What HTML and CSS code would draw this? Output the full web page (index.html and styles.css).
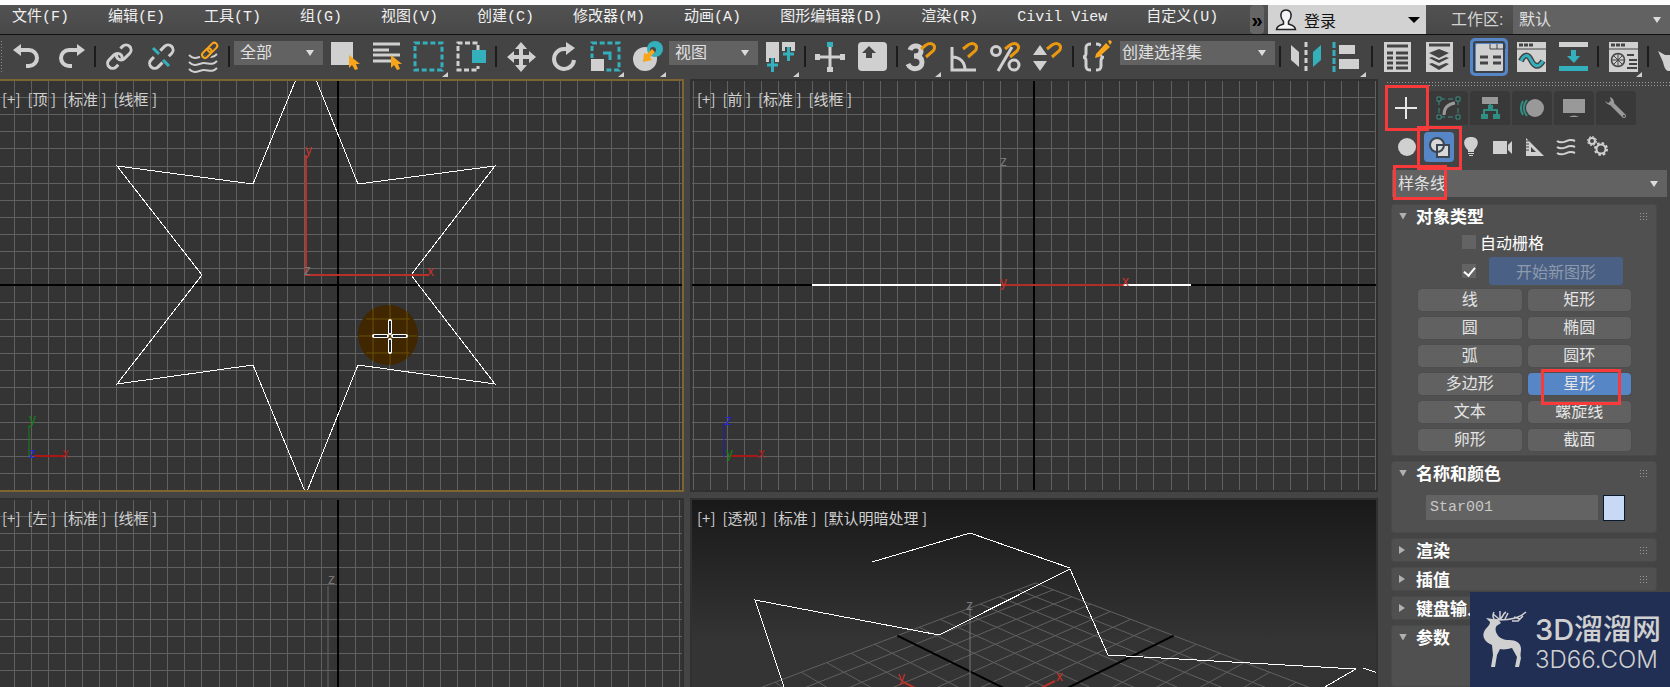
FILE: index.html
```html
<!DOCTYPE html>
<html lang="zh-CN">
<head>
<meta charset="utf-8">
<title>Star001</title>
<link rel="stylesheet" href="styles.css">
</head>
<body>
<header class="menubar">
  <nav class="menus">
    <button>文件(F)</button><button>编辑(E)</button><button>工具(T)</button><button>组(G)</button><button>视图(V)</button><button>创建(C)</button><button>修改器(M)</button><button>动画(A)</button><button>图形编辑器(D)</button><button>渲染(R)</button><button>Civil View</button><button>自定义(U)</button>
  </nav>
  <button class="more" aria-label="更多">»</button>
  <button class="login">
    <svg width="24" height="24" viewBox="0 0 24 24"><path d="M12 2c-4 0-5.500 3-5 6.500.4 2.800 1.600 4 2.500 5v2.500C7 17 3 17.500 2.500 21.500h19C21 17.500 17 17 14.500 16v-2.500c.9-1 2.100-2.200 2.500-5C17.500 5 16 2 12 2z" fill="#f4f4f8" stroke="#222" stroke-width="1.500"/></svg>
    <span>登录</span><i class="tri"></i>
  </button>
  <label class="ws-label" for="ws">工作区:</label>
  <span class="drop ws"><select id="ws"><option>默认</option></select></span>
</header>

<div class="toolbar">
  <i class="grip-v"></i>
  <button class="tool" aria-label="撤消"><svg viewBox="0 0 42 42"><path d="M11 14h11a8 8 0 0 1 0 16h-3" class="s4"/><path d="M6 14l8-6v12z" class="f"/></svg></button>
  <button class="tool" aria-label="重做"><svg viewBox="0 0 42 42"><path d="M30 14H20a8 8 0 0 0 0 16h3" class="s4"/><path d="M36 14l-8-6v12z" class="f"/></svg></button>
  <i class="sep"></i>
  <button class="tool" aria-label="链接"><svg viewBox="0 0 42 42"><g transform="rotate(-45 20 21)" class="s3"><path d="M14 26h-3a5 5 0 0 1 0-10h7a5 5 0 0 1 5 5 5 5 0 0 1-3 4"/><path d="M27 16h3a5 5 0 0 1 0 10h-7a5 5 0 0 1-5-5 5 5 0 0 1 3-4"/></g></svg></button>
  <button class="tool" aria-label="取消链接"><svg viewBox="0 0 42 42"><g transform="rotate(-45 20 21)" class="s3"><path d="M17 26h-6a5 5 0 0 1 0-10h4"/><path d="M24 16h6a5 5 0 0 1 0 10h-4"/></g><path d="M12 12l6 6M22 24l6 6" class="t3"/></svg></button>
  <button class="tool" aria-label="绑定到空间扭曲"><svg viewBox="0 0 42 42"><path d="M6 19c6 6 10 1 15 1s8 3 13-2M6 26c6 6 10 1 15 1s8 3 13-2M6 33c6 6 10 1 15 1s8 3 13-2" class="s2"/><g transform="rotate(-45 27 14)" stroke="#444" stroke-width="5" fill="none"><rect x="17" y="11" width="11" height="6" rx="3"/><rect x="25" y="11" width="11" height="6" rx="3"/></g><g transform="rotate(-45 27 14)" class="o2"><rect x="17" y="11" width="11" height="6" rx="3"/><rect x="25" y="11" width="11" height="6" rx="3"/></g></svg></button>
  <i class="sep"></i>
  <span class="drop small"><select aria-label="选择过滤器"><option>全部</option></select></span>
  <button class="tool" aria-label="选择对象"><svg viewBox="0 0 42 42"><path d="M7 6h22v23H7z" class="f"/><path d="M25 19v13l3-3 3 5 3-1-2-5h4z" class="of"/></svg></button>
  <button class="tool" aria-label="按名称选择"><svg viewBox="0 0 42 42"><path d="M7 8h27M7 14h16M7 19h27M7 25h18" class="s3"/><path d="M25 19v13l3-3 3 5 3-1-2-5h4z" class="of"/></svg></button>
  <button class="tool" aria-label="矩形选择区域"><svg viewBox="0 0 42 42"><rect x="7" y="7" width="27" height="27" class="t3" stroke-dasharray="5 2.700"/><path d="M40 36v5h-6z" class="f"/></svg></button>
  <button class="tool" aria-label="窗口交叉"><svg viewBox="0 0 42 42"><path d="M28 14V7H8v27h20v-4" class="s3" stroke-dasharray="5 2.500"/><path d="M22 14h14v13H22z" class="tf"/></svg></button>
  <i class="sep"></i>
  <button class="tool" aria-label="移动"><svg viewBox="0 0 42 42"><path d="M21 9v25M9 21h25" class="s4"/><path d="M21 6l6 7H15zM21 36l6-7H15zM7 21l7-6v12zM36 21l-7-6v12z" class="f"/></svg></button>
  <button class="tool" aria-label="旋转"><svg viewBox="0 0 42 42"><path d="M25 13h-3a10 10 0 1 0 10 11" class="s4"/><path d="M24 6l9 6-9 7z" class="f"/></svg></button>
  <button class="tool" aria-label="缩放"><svg viewBox="0 0 42 42"><rect x="8" y="7" width="27" height="27" class="t3" stroke-dasharray="5 2.700"/><path d="M6 22h15v14H6z" fill="#444"/><path d="M7 23h13v12H7z" class="f"/><path d="M19 17h7v7" class="t3"/><path d="M40 36v5h-6z" class="f"/></svg></button>
  <button class="tool" aria-label="放置"><svg viewBox="0 0 42 42"><circle cx="19" cy="23" r="12" class="f"/><circle cx="29" cy="13" r="8" class="tf"/><circle cx="27" cy="14" r="3" fill="#444"/><path d="M26 13l3 3-5 5 2 3-9 2 1-9 3 1z" class="of"/><path d="M40 36v5h-6z" class="f"/></svg></button>
  <span class="drop small"><select aria-label="参考坐标系"><option>视图</option></select></span>
  <button class="tool" aria-label="轴点中心"><svg viewBox="0 0 42 42"><path d="M7 6h13v20H7zM23 6h13v15H23z" class="f"/><path d="M13 22v14M7 29h13M29 11v14M23 18h13" stroke="#444" stroke-width="6"/><path d="M13.500 22v14M8 29h11M29.500 11v14M24 18h11" class="t3"/><path d="M40 36v5h-6z" class="f"/></svg></button>
  <i class="sep"></i>
  <button class="tool" aria-label="操纵"><svg viewBox="0 0 42 42"><path d="M21 11v23M9 21h25" class="s3"/><path d="M18 6h6v5h-6z" class="tf"/><path d="M6 18h5v6H6zM31 18h5v6h-5zM18 31h6v5h-6z" class="f"/></svg></button>
  <button class="tool" aria-label="键盘快捷键覆盖"><svg viewBox="0 0 42 42"><rect x="7" y="6" width="29" height="29" rx="4" class="f"/><path d="M18 10l7 7h-4v5h-6v-5h-4z" fill="#444"/></svg></button>
  <i class="sep"></i>
  <button class="tool" aria-label="捕捉开关"><svg viewBox="0 0 42 42"><path d="M9 14c2-6 12-5 11 1 0 4-4 5-7 5 4 0 8 1 8 6 0 8-11 9-14 2" fill="none" stroke="#d0d0d0" stroke-width="5"/><g class="mag"><path d="M20 13l5-4c6-4 11 1 7 6l-7 6"/></g><path d="M40 36v5h-6z" class="f"/></svg></button>
  <button class="tool" aria-label="角度捕捉"><svg viewBox="0 0 42 42"><path d="M9 11v23h24M9 21c8 0 13 5 13 13" class="s3"/><g class="mag"><path d="M20 13l5-4c6-4 11 1 7 6l-7 6"/></g></svg></button>
  <button class="tool" aria-label="百分比捕捉"><svg viewBox="0 0 42 42"><circle cx="11" cy="15" r="4.500" class="s3"/><circle cx="29" cy="29" r="5" class="s3"/><path d="M27 11L13 35" class="s3"/><g class="mag"><path d="M20 13l5-4c6-4 11 1 7 6l-7 6"/></g></svg></button>
  <button class="tool" aria-label="微调器捕捉"><svg viewBox="0 0 42 42"><path d="M13 9l7 10H6zM13 35l7-10H6z" class="f"/><g class="mag"><path d="M20 13l5-4c6-4 11 1 7 6l-7 6"/></g></svg></button>
  <i class="sep"></i>
  <button class="tool" aria-label="编辑命名选择集"><svg viewBox="0 0 42 42"><path d="M14 8c-4 0-5 1-5 4v5c0 2-1 4-3 4 2 0 3 2 3 4v5c0 3 1 4 5 4M19 8c4 0 5 1 5 4v5c0 2 1 4 3 4-2 0-3 2-3 4v5c0 3-1 4-5 4" class="s3"/><path d="M32 8l-9 9" stroke="#444" stroke-width="9"/><path d="M29 7l4 4-11 10-4 1 1-4zM31 5l2-1 2 2-2 3z" class="of"/></svg></button>
  <span class="drop wide"><select aria-label="命名选择集"><option>创建选择集</option></select></span>
  <i class="sep"></i>
  <button class="tool" aria-label="镜像"><svg viewBox="0 0 42 42"><path d="M7 9l8 7v15l-8-7z" class="f"/><path d="M37 9l-8 7v15l8-7z" class="tf"/><path d="M22 6v30" class="s3" stroke-dasharray="5 3"/></svg></button>
  <button class="tool" aria-label="对齐"><svg viewBox="0 0 42 42"><path d="M8 6v30" class="t3" stroke-dasharray="6 2"/><path d="M13 9h16v9H13zM13 23h20v10H13z" class="f"/><path d="M40 36v5h-6z" class="f"/></svg></button>
  <i class="sep"></i>
  <button class="tool" aria-label="场景资源管理器"><svg viewBox="0 0 42 42"><path d="M8 6h27v30H8z" class="f"/><path d="M11 10h21M11 17h6M20 17h12M11 22h6M20 22h12M11 27h6M20 27h12M11 32h6M20 32h12" class="d2"/></svg></button>
  <button class="tool" aria-label="层资源管理器"><svg viewBox="0 0 42 42"><path d="M8 6h27v30H8z" class="f"/><path d="M11 9h21" class="d2"/><path d="M21 13l10 4-10 5-10-5z" fill="#444"/><path d="M11 22l3-1 7 3 7-3 3 1-10 5zM11 28l3-1 7 3 7-3 3 1-10 6z" fill="#444"/></svg></button>
  <i class="sep"></i>
  <button class="tool on" aria-label="功能区"><svg viewBox="0 0 42 42"><path d="M9 8h28v27H8V9z" class="f"/><path d="M22 8v5h15M29 8v5M37 8v5" fill="none" stroke="#444" stroke-width="1"/><path d="M12 21h8M25 21h8M12 27h8M25 27h8" stroke="#444" stroke-width="3"/></svg></button>
  <button class="tool" aria-label="曲线编辑器"><svg viewBox="0 0 42 42"><path d="M7 6h29v30H7z" class="f"/><path d="M7 13h29" class="d1"/><path d="M9 9h4M14 9h4M19 9h4" class="d2"/><path d="M11 25c3-7 7-7 10-1s7 9 12 1" fill="none" stroke="#444" stroke-width="6"/><path d="M11 25c3-7 7-7 10-1s7 9 12 1" class="t3"/></svg></button>
  <button class="tool" aria-label="图解视图"><svg viewBox="0 0 42 42"><path d="M7 6h29v5H7z" class="f"/><path d="M7 30h29v5H7zM19 14h5v6h4l-6 7-7-7h4z" class="tf"/></svg></button>
  <i class="sep"></i>
  <button class="tool" aria-label="材质编辑器"><svg viewBox="0 0 42 42"><path d="M7 6h29v30H7z" class="f"/><path d="M7 13h29" class="d1"/><path d="M9 9h4M14 9h4M19 9h4" class="d2"/><circle cx="16" cy="24" r="6.500" fill="#d0d0d0" stroke="#444" stroke-width="1.500"/><path d="M10 24h12M16 18v12M12 20l8 8M20 20l-8 8" class="d1"/><path d="M25 19h7M27 24h8M27 28h8M25 32h10" stroke="#444" stroke-width="2"/><path d="M40 36v5h-6z" class="f"/></svg></button>
  <i class="sep"></i>
  <button class="tool last" aria-label="渲染设置"><svg viewBox="0 0 42 42"><path d="M6 15l7 4h20c4 7 1 14-5 16H16c-3-1-4-5-5-9z" class="f"/></svg></button>
</div>

<main class="work">
  <section class="views">
    <div class="view active">
      <svg class="scene" viewBox="0 81 682 409" preserveAspectRatio="xMidYMid slice">
        <g class="grid" data-x="338" data-y="285"></g>
        <circle cx="388" cy="335" r="30" fill="#402700"/>
        <path class="halo" d="M373 308v54M390 305v60M407 312v46M359 336h58M366 319h44M366 353h44"/>
        <path class="shape" d="M306 55L253 184 117 166 202 275 117 384 253 365 306 494 358 365 495 384 411 275 495 166 358 184z"/>
        <path class="red" d="M306 155v120h122"/>
        <text x="305" y="155" class="ax r">y</text><text x="427" y="276" class="ax r">x</text><text x="304" y="275" class="ax k">z</text>
        <path d="M390 321v12M390 340v12M374 336h13M393 336h13" stroke="#fff" stroke-width="4" stroke-linecap="round"/>
        <path d="M390 321v12M390 340v12M374 336h13M393 336h13" stroke="#222" stroke-width="2"/>
        <path d="M29 457v-32" stroke="#178017"/><path d="M34 456h30" stroke="#a81818" stroke-width="2"/>
        <text x="29" y="424" class="ax g">y</text><text x="62" y="458" class="ax m">x</text><text x="29" y="458" class="ax b">z</text>
      </svg>
      <div class="labels"><button>[+]</button><button>[顶 ]</button><button>[标准 ]</button><button>[线框 ]</button></div>
    </div>
    <div class="view">
      <svg class="scene" viewBox="692 81 684 409" preserveAspectRatio="xMidYMid slice">
        <g class="grid" data-x="1034" data-y="285"></g>
        <path d="M1001 280V165" stroke="#777"/>
        <path d="M812 285h379" stroke="#fff" stroke-width="2"/>
        <path d="M1001 285h122" stroke="#b03028" stroke-width="2"/>
        <text x="1000" y="166" class="ax k">z</text><text x="1000" y="287" class="ax r">y</text><text x="1122" y="286" class="ax r">x</text>
        <path d="M724 457v-34" stroke="#1c1cc0"/><path d="M730 456h28" stroke="#a81818" stroke-width="2"/>
        <text x="725" y="425" class="ax b">z</text><text x="726" y="458" class="ax g">y</text><text x="758" y="458" class="ax m">x</text>
      </svg>
      <div class="labels"><button>[+]</button><button>[前 ]</button><button>[标准 ]</button><button>[线框 ]</button></div>
    </div>
    <div class="view low">
      <svg class="scene" viewBox="0 500 682 187" preserveAspectRatio="xMidYMin slice">
        <g class="grid" data-x="338" data-y="721"></g>
        <path d="M328 586v200" stroke="#666"/><text x="328" y="584" class="ax k">z</text>
      </svg>
      <div class="labels"><button>[+]</button><button>[左 ]</button><button>[标准 ]</button><button>[线框 ]</button></div>
    </div>
    <div class="view low persp">
      <svg class="scene" viewBox="692 500 684 187" preserveAspectRatio="xMidYMin slice">
        <g class="plane"></g>
        <path d="M970 606v90" stroke="#777"/><text x="966" y="610" class="ax k">z</text>
        <path class="shape" d="M872 562L970 533 1070 568M784 687L755 600 939 635 1070 569 1108 655 1356 669 1316 692M1363 668L1378 673"/>
        <path class="red" d="M903 682l12 6M1055 681l-14 7"/>
        <text x="898" y="682" class="ax r">y</text><text x="1056" y="681" class="ax r">x</text>
      </svg>
      <div class="labels"><button>[+]</button><button>[透视 ]</button><button>[标准 ]</button><button>[默认明暗处理 ]</button></div>
    </div>
  </section>

  <aside class="panel">
    <i class="grip-h"></i>
    <div class="tabs">
      <button class="tab cur" aria-label="创建"><svg viewBox="0 0 40 34"><path d="M20 6v22M9 17h22" stroke="#e8e8e8" stroke-width="2"/></svg><span class="mark m1"></span></button>
      <button class="tab" aria-label="修改"><svg viewBox="0 0 40 34"><path d="M12 8h17M12 26h17M11 9v17M30 9v17" stroke="#3a8f84" stroke-dasharray="5 3"/><path d="M9 6h4v4H9zM28 6h4v4h-4zM9 24h4v4H9zM28 24h4v4h-4z" fill="#333" stroke="#3a8f84"/><path d="M16 24c0-7 4-11 11-12" fill="none" stroke="#999" stroke-width="3"/></svg></button>
      <button class="tab" aria-label="层次"><svg viewBox="0 0 40 34"><path d="M12 6h16v7H12z" fill="#999"/><path d="M20 13v6M14 25v-6h13v6" fill="none" stroke="#2f8f84" stroke-width="2"/><path d="M11 23h7v5h-7zM23 23h7v5h-7zM18 14h5v4h-5z" fill="#2f8f84"/></svg></button>
      <button class="tab" aria-label="运动"><svg viewBox="0 0 40 34"><circle cx="23" cy="17" r="9" fill="#999"/><path d="M15 9c-4 5-4 11 0 16M11 10c-3 5-3 9 0 14" fill="none" stroke="#2f8f84" stroke-width="2"/></svg></button>
      <button class="tab" aria-label="显示"><svg viewBox="0 0 40 34"><path d="M9 8h22v14H9zM15 26q5-3 10 0z" fill="#999"/></svg></button>
      <button class="tab" aria-label="实用程序"><svg viewBox="0 0 40 34"><path d="M15 12l13 13" stroke="#999" stroke-width="4" stroke-linecap="round"/><path d="M9 10a6 6 0 0 0 9 3 6 6 0 0 0-4-7l1 5-3 1z" fill="#999"/><circle cx="28" cy="25" r="1" fill="#333"/></svg></button>
    </div>
    <div class="cats">
      <button aria-label="几何体"><svg viewBox="0 0 32 30"><circle cx="16" cy="15" r="9" class="f"/></svg></button>
      <button class="cat-on" aria-label="图形"><svg viewBox="0 0 32 30"><rect x="1" width="30" height="30" rx="4" fill="#5686c6"/><circle cx="14" cy="13" r="7" fill="#d8d8d8" stroke="#3c4552" stroke-width="2"/><path d="M14 13h12v12H14z" fill="#d8d8d8" stroke="#3c4552" stroke-width="2"/><path d="M21 13a7 7 0 0 1-7 7" fill="none" stroke="#3c4552" stroke-width="2"/></svg><span class="mark m2"></span></button>
      <button aria-label="灯光"><svg viewBox="0 0 32 30"><path d="M16 5c-9 0-8 9-3 13v2h6v-2c5-4 6-13-3-13zM13 21h6v1h-6zM14 23h4v1h-4z" class="f"/></svg></button>
      <button aria-label="摄影机"><svg viewBox="0 0 32 30"><path d="M6 9h14v13H6zM21 13l4-4v13l-4-4z" class="f"/></svg></button>
      <button aria-label="辅助对象"><svg viewBox="0 0 32 30"><path d="M7 6v18h18zM12 15v5h5z" class="f" fill-rule="evenodd"/><path d="M7 9h3M7 12h3M7 15h3M7 18h3" stroke="#444"/></svg></button>
      <button aria-label="空间扭曲"><svg viewBox="0 0 32 30"><path d="M6 9c7 5 10-4 18 0M6 15c7 5 10-4 18 0M6 21c7 5 10-4 18 0" class="s2"/></svg></button>
      <button aria-label="系统"><svg viewBox="0 0 32 30"><circle cx="9" cy="9" r="3" class="s2"/><circle cx="9" cy="9" r="4.500" fill="none" stroke="#d0d0d0" stroke-width="1" stroke-dasharray="2 1.500"/><circle cx="18" cy="17" r="4.500" class="s2"/><circle cx="18" cy="17" r="6" fill="none" stroke="#d0d0d0" stroke-width="2" stroke-dasharray="2.500 2.200"/></svg></button>
    </div>
    <span class="drop kind"><select aria-label="图形类别"><option>样条线</option></select><span class="mark m3"></span></span>

    <div class="rolls">
      <section class="roll">
        <h2><button><i class="dn"></i>对象类型</button><i class="dots"></i></h2>
        <div class="checks">
          <label><input type="checkbox">自动栅格</label>
          <div class="startrow"><input type="checkbox" checked aria-label="开始新图形"><button class="start" disabled>开始新图形</button></div>
        </div>
        <div class="types">
          <button>线</button><button>矩形</button><button>圆</button><button>椭圆</button><button>弧</button><button>圆环</button><button>多边形</button><button class="sel">星形<span class="mark m4"></span></button><button>文本</button><button>螺旋线</button><button>卵形</button><button>截面</button>
        </div>
      </section>
      <section class="roll">
        <h2><button><i class="dn"></i>名称和颜色</button><i class="dots"></i></h2>
        <div class="name"><input type="text" value="Star001" aria-label="名称"><button class="swatch" aria-label="颜色"></button></div>
      </section>
      <section class="roll"><h2><button><i class="rt"></i>渲染</button><i class="dots"></i></h2></section>
      <section class="roll"><h2><button><i class="rt"></i>插值</button><i class="dots"></i></h2></section>
      <section class="roll"><h2><button><i class="rt"></i>键盘输入</button><i class="dots"></i></h2></section>
      <section class="roll grow"><h2><button><i class="dn"></i>参数</button><i class="dots"></i></h2></section>
    </div>
  </aside>
</main>

<div class="brand">
  <svg width="48" height="62" viewBox="0 0 48 62"><path d="M4 9l7 1c3-1 6 1 8 4l-3 2c-3 1-3 6-1 9 2 4 7 6 12 6 7 0 12 3 12 9 0 4-1 5 0 9l-2 9h-4l2-10-5-9c-4 1-8 2-12 1l-3 6-2 12H9l2-12-1-10C3 33 0 28 2 23c2-5 6-6 6-10z" fill="#d0d0d0"/><path d="M12 10c-2-3-1-5 0-7M15 11c7-1 4-5 9-8M17 11c9 0 20-1 27-8M11 5l6 5M18 2v7M26 4l-3 6M32 8l6 2M30 12h6l5-5" fill="none" stroke="#d0d0d0" stroke-width="1.500"/></svg>
  <div class="brand-text"><b>3D溜溜网</b><span>3D66.COM</span></div>
</div>
<script src="scene.js"></script>
</body>
</html>
```
FILE: styles.css
```css
* { box-sizing: border-box; }
body { margin: 0; height: 100vh; display: flex; flex-direction: column; overflow: hidden; background: #444; color: #e4e4e4; font: 16px "Liberation Sans", "Noto Sans CJK SC", sans-serif; border-top: 5px solid #fdfdfd; }
button, select, input { font: inherit; color: inherit; margin: 0; padding: 0; border: 0; background: none; }
button { position: relative; }
svg { display: block; }

.menubar { display: flex; align-items: stretch; height: 30px; flex: none; background: linear-gradient(#525252, #484848); border-bottom: 1px solid #111; }
.menus { display: flex; align-items: flex-start; gap: 39px; padding-left: 12px; flex: 1; overflow: hidden; }
.menus button { font: 15px/25px "Liberation Mono", "Noto Sans CJK SC", monospace; white-space: nowrap; color: #f0f0f0; }
.more { width: 14px; background: #666; border-radius: 4px; color: #000; font-size: 20px; font-weight: bold; line-height: 20px; }
.login { display: flex; align-items: center; gap: 6px; width: 158px; margin-left: 4px; padding: 0 6px; background: #d2d2d2; color: #111; }
.login .tri { margin-left: auto; border: 6px solid transparent; border-top-color: #000; border-bottom: 0; }
.ws-label { width: 87px; padding-left: 25px; line-height: 29px; white-space: nowrap; font-size: 16px; color: #d4d4d4; }

.drop { position: relative; display: block; background: #626262; }
.drop select { display: block; width: 100%; height: 100%; padding: 0 6px; appearance: none; color: #e0e0e0; }
.drop::after { content: ""; position: absolute; right: 9px; top: calc(50% - 3px); border: 4px solid transparent; border-top: 6px solid #dcdcdc; border-bottom: 0; pointer-events: none; }
.ws { width: 157px; }

.toolbar { display: flex; align-items: center; flex: none; height: 44px; padding-bottom: 1px; overflow: hidden; }
.toolbar > * { flex: none; }
.tool { width: 42px; height: 42px; }
.tool svg { width: 42px; height: 42px; }
.on::before { content: ""; position: absolute; inset: 2px; border-radius: 5px; background: #5686c6; }
.on svg { position: relative; }
.on::after { content: ""; position: absolute; inset: 5px; border-radius: 3px; border: 2px solid #3c4048; }
.sep { width: 8px; height: 21px; background: linear-gradient(#1c1c1c, #1c1c1c) 3px 0 / 2px 21px no-repeat; }
.grip-v { width: 7px; height: 34px; background: radial-gradient(#888 1px, transparent 1px) 0 0 / 3px 3px; background-clip: content-box; padding-right: 5px; }
.small, .wide { height: 24px; margin: -8px 1px 0; }
.small { width: 89px; }
.wide { width: 155px; }
.wide select { padding: 0 2px; }
.toolbar select { font-size: 16px; }

.f { fill: #d0d0d0; }
.tf { fill: #34b0bd; }
.of { fill: #f9a51a; }
.s4, .s3, .s2 { fill: none; stroke: #d0d0d0; stroke-width: 4; }
.s3 { stroke-width: 3; }
.s2 { stroke-width: 2; }
.t3 { fill: none; stroke: #34b0bd; stroke-width: 3; }
.o2 { fill: none; stroke: #f9a51a; stroke-width: 2; }
.d1 { stroke: #444; stroke-width: 1; }
.d2 { stroke: #444; stroke-width: 3; }
.mag path { fill: none; stroke: #e9980f; stroke-width: 3; }

.work { display: flex; flex: 1; min-height: 0; }
.views { flex: 1; min-width: 0; display: grid; grid-template-columns: 684fr 688fr; grid-template-rows: 413fr 189fr; gap: 6px; }
.view { position: relative; min-width: 0; min-height: 0; overflow: hidden; background: #343434; border: 2px solid #303030; }
.view:nth-child(odd) { border-left: 0; }
.low { border-bottom: 0; }
.active { border-color: #7d6430; }
.persp { background: linear-gradient(#191919, #343434 75%); }
.scene { width: 100%; height: 100%; }
.labels { position: absolute; left: 2px; top: 8px; display: flex; gap: 7px; }
.view:nth-child(even) .labels { left: 5px; }
.labels button { font: 15px/20px "Noto Sans CJK SC", sans-serif; color: #d0d0d0; white-space: pre; }
.grid path, .plane path { fill: none; stroke: #606060; stroke-width: 1; }
.grid .zero, .plane .zero { stroke: #000; stroke-width: 2; }
.grid { shape-rendering: crispEdges; }
.shape { fill: none; stroke: #fff; stroke-width: 1; shape-rendering: crispEdges; }
.red { fill: none; stroke: #b83028; stroke-width: 2; }
.halo { stroke: #685008; }
.ax { font: 14px "Liberation Sans", sans-serif; }
.r { fill: #c8322c; } .k { fill: #777; } .g { fill: #178017; } .m { fill: #a81818; } .b { fill: #2424d8; }

.panel { flex: none; width: 292px; padding: 2px 0 0 8px; display: flex; flex-direction: column; }
.grip-h { height: 5px; background: radial-gradient(#999 1px, transparent 1px) 0 0 / 3px 3px; }
.tabs { display: flex; gap: 2px; padding-top: 5px; }
.tab { width: 40px; height: 34px; background: #393939; border-radius: 4px 4px 0 0; }
.cur { background: #444; }
.cats { display: flex; padding: 7px 0 0 5px; }
.cats button, .cats svg { width: 32px; height: 30px; }
.kind { height: 27px; margin: 8px 3px 7px 6px; }
.mark { position: absolute; border: 3px solid #f93a3a; z-index: 2; pointer-events: none; }
.m1 { left: -1px; top: -6px; width: 44px; height: 46px; }
.m2 { left: -6px; top: -6px; width: 45px; height: 44px; }
.m3 { left: 1px; top: -5px; width: 54px; height: 35px; }
.m4 { left: 13px; top: -4px; width: 80px; height: 36px; }

.rolls { display: flex; flex-direction: column; gap: 5px; flex: 1; margin: 0 13px 0 5px; }
.roll { background: #505050; border-radius: 3px; border: 1px solid #494949; }
.grow { flex: 1; }
.roll h2 { display: flex; align-items: center; justify-content: space-between; margin: 0; height: 22px; padding: 0 8px 0 7px; font-size: 17px; font-weight: bold; color: #fff; }
.roll h2 button { display: flex; align-items: center; font: bold 17px/22px "Noto Sans CJK SC", sans-serif; }
.dn, .rt { width: 17px; height: 7px; background: #b0b0b0; clip-path: polygon(0 0, 8px 0, 4px 7px); }
.rt { height: 8px; clip-path: polygon(0 0, 6px 4px, 0 8px); }
.dots { width: 9px; height: 8px; background: radial-gradient(#999 1px, transparent 1px) 0 0 / 3px 3px; }
input[type=checkbox] { appearance: none; width: 14px; height: 14px; background: #636363; }
.startrow { position: relative; }
.startrow::before { content: ""; position: absolute; left: 4px; top: 8px; width: 5px; height: 9px; border: solid #fff; border-width: 0 2px 2px 0; rotate: 40deg; pointer-events: none; }
.checks { padding-left: 70px; color: #fff; }
.checks label, .startrow { display: flex; align-items: center; gap: 4px; height: 30px; }
.startrow { gap: 13px; height: 28px; }
.start { width: 134px; height: 28px; background: #4a6084; border-radius: 3px; color: #8e9aad; }
.types { display: grid; grid-template-columns: 1fr 1fr; gap: 6px; padding: 4px 25px 4px 26px; }
.types button { height: 22px; line-height: 22px; border-radius: 4px; background: #616161; box-shadow: 0 0 1px #444; white-space: nowrap; }
.types .sel { background: #5686c6; }
.name { display: flex; gap: 5px; padding: 11px 31px 11px 34px; }
.name input { flex: 1; min-width: 0; height: 25px; padding: 0 4px; background: #636363; font: 15px "Liberation Mono", monospace; color: #c8c8c8; }
.swatch { width: 22px; height: 26px; background: #c8d9f5; border: 1px solid #0a1a2e; }

.brand { position: fixed; right: 0; bottom: 0; z-index: 3; width: 200px; height: 95px; display: flex; gap: 5px; padding: 17px 8px 0 12px; background: #212f55; color: #d0d0d0; }
.brand-text { display: flex; flex-direction: column; white-space: nowrap; padding-top: 3px; }
.brand b { font: 500 29px/36px Inter, "Noto Sans CJK SC", sans-serif; }
.brand span { font: 300 24px/24px Inter, sans-serif; }
```
FILE: scene.js
```js
const NS = "http://www.w3.org/2000/svg";

function line(group, d, zero) {
  const p = document.createElementNS(NS, "path");
  p.setAttribute("d", d);
  if (zero) p.setAttribute("class", "zero");
  group.appendChild(p);
}

// Orthographic grids: lines every 17.07 units around the world axes.
const STEP = 17.07;
document.querySelectorAll(".grid").forEach((g) => {
  const cx = +g.dataset.x;
  const cy = +g.dataset.y;
  for (let i = -40; i <= 40; i++) {
    if (i === 0) continue;
    const x = Math.round(cx + i * STEP) + 0.5;
    const y = Math.round(cy + i * STEP) + 0.5;
    line(g, `M${x} ${cy - 700}V${cy + 700}`);
    line(g, `M${cx - 700} ${y}H${cx + 700}`);
  }
  line(g, `M${cx} ${cy - 700}V${cy + 700}`, true);
  line(g, `M${cx - 700} ${cy}H${cx + 700}`, true);
});

// Ground plane in perspective, 14 by 14 cells, seen from one corner.
const plane = document.querySelector(".plane");
const project = (u, v) => {
  const w = 1 - 0.225 * (u + v);
  return `${(1035.5 + (245.3 * (u - v)) / w).toFixed(1)} ${(583 + (93.5 * (u + v)) / w).toFixed(1)}`;
};
const order = [...Array(15).keys()].filter((i) => i !== 7).concat(7);
order.forEach((i) => {
  const t = i / 14;
  line(plane, `M${project(t, 0)}L${project(t, 1)}`, i === 7);
  line(plane, `M${project(0, t)}L${project(1, t)}`, i === 7);
});
```
